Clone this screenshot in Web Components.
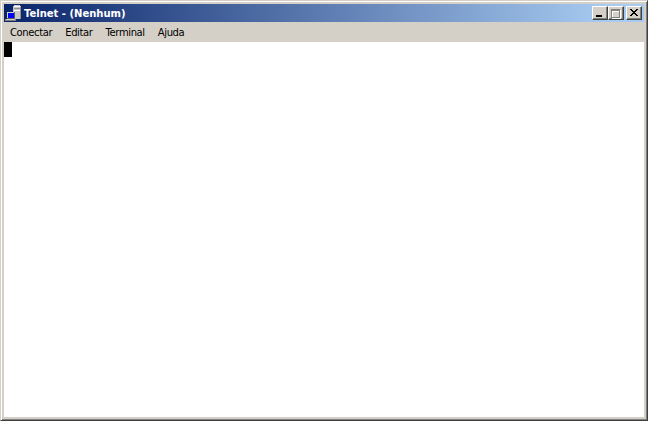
<!DOCTYPE html>
<html lang="pt">
<head>
<meta charset="utf-8">
<title>Telnet</title>
<style>
  html, body { margin: 0; height: 100%; overflow: hidden; background: #d4d0c8; }
</style>
</head>
<body>
<telnet-window caption="Telnet - (Nenhum)">
  <menu-item slot="menu">Conectar</menu-item>
  <menu-item slot="menu">Editar</menu-item>
  <menu-item slot="menu">Terminal</menu-item>
  <menu-item slot="menu">Ajuda</menu-item>
</telnet-window>
<script>
/** Raised caption button (minimize, maximize, close) */
class CaptionButton extends HTMLElement {
  connectedCallback() {
    const glyphs = {
      min: '<path d="M3 8h6v2H3z" fill="#000"/>',
      max: '<path d="M3 3h9v9H3z M4 5v6h7V5z" fill="#fff" fill-rule="evenodd"/><path d="M2 2h9v9H2z M3 4v6h7V4z" fill="#808080" fill-rule="evenodd"/>',
      close: '<path d="M3 2h2v1H3zM9 2h2v1H9zM4 3h2v1H4zM8 3h2v1H8zM5 4h4v1H5zM6 5h2v1H6zM5 6h4v1H5zM4 7h2v1H4zM8 7h2v1H8zM3 8h2v1H3zM9 8h2v1H9z" fill="#000"/>'
    };
    const root = this.attachShadow({ mode: 'open' });
    root.innerHTML = `
      <style>
        :host {
          display: block;
          box-sizing: border-box;
          width: 16px;
          height: 14px;
          background: #d4d0c8;
          border-top: 1px solid #fff;
          border-left: 1px solid #fff;
          border-right: 1px solid #404040;
          border-bottom: 1px solid #404040;
          box-shadow: inset -1px -1px 0 #808080;
        }
        svg { display: block; }
      </style>
      <svg width="14" height="12" viewBox="0 0 14 12" shape-rendering="crispEdges">${glyphs[this.getAttribute('kind')]}</svg>
    `;
  }
}

/** Entry of the menu bar */
class MenuItem extends HTMLElement {
  connectedCallback() {
    const root = this.attachShadow({ mode: 'open' });
    root.innerHTML = `
      <style>
        :host {
          display: block;
          font: 10px "DejaVu Sans", sans-serif;
          letter-spacing: -0.38px;
          color: #000;
          line-height: 21px;
          white-space: nowrap;
        }
      </style>
      <slot></slot>
    `;
  }
}

/** Classic window frame with caption, menu bar and terminal area */
class TelnetWindow extends HTMLElement {
  connectedCallback() {
    const root = this.attachShadow({ mode: 'open' });
    root.innerHTML = `
      <style>
        :host {
          display: flex;
          flex-direction: column;
          box-sizing: border-box;
          width: 648px;
          height: 421px;
          background: #d4d0c8;
          border-top: 1px solid #d4d0c8;
          border-left: 1px solid #d4d0c8;
          border-right: 1px solid #404040;
          border-bottom: 1px solid #404040;
          box-shadow: inset 1px 1px 0 #fff, inset -1px -1px 0 #808080;
          padding: 3px;
        }
        .caption {
          display: flex;
          align-items: center;
          height: 18px;
          flex: none;
          padding: 0 2px 0 1px;
          background: linear-gradient(90deg, #0a246a, #a6caf0 94%);
          color: #fff;
          font: bold 10px "DejaVu Sans", sans-serif;
        }
        .caption svg { margin-right: 3px; flex: none; }
        .caption span { flex: 1; white-space: nowrap; }
        .buttons { display: flex; }
        .buttons caption-button:last-child { margin-left: 2px; }
        .menu {
          display: flex;
          gap: 13px;
          height: 20px;
          flex: none;
          padding-left: 6px;
        }
        .screen {
          flex: 1;
          background: #fff;
        }
        .cursor {
          width: 8px;
          height: 15px;
          background: #000;
        }
      </style>
      <div class="caption">
        <svg width="16" height="16" viewBox="0 0 16 16" shape-rendering="crispEdges">
          <path d="M8 1h1V0h6v1h1v13H8z" fill="#c8c8c8"/>
          <path d="M9 1h6v1H9zM9 5h6v1H9z" fill="#fff"/>
          <path d="M15 2h1v12h-1zM9 3h6v1H9z" fill="#909090"/>
          <path d="M2 7h8v7H2z" fill="#d4d0c8"/>
          <path d="M9 7h1v7H9zM2 13h8v1H2z" fill="#606060"/>
          <path d="M3 8h6v5H3z" fill="#0000ff"/>
          <path d="M0 14h11v2H0z" fill="#808080"/>
          <path d="M1 14h9v1H1z" fill="#d4d0c8"/>
        </svg>
        <span>${this.getAttribute('caption')}</span>
        <div class="buttons">
          <caption-button kind="min"></caption-button>
          <caption-button kind="max"></caption-button>
          <caption-button kind="close"></caption-button>
        </div>
      </div>
      <div class="menu"><slot name="menu"></slot></div>
      <div class="screen"><div class="cursor"></div></div>
    `;
  }
}

customElements.define('caption-button', CaptionButton);
customElements.define('menu-item', MenuItem);
customElements.define('telnet-window', TelnetWindow);
</script>
</body>
</html>
